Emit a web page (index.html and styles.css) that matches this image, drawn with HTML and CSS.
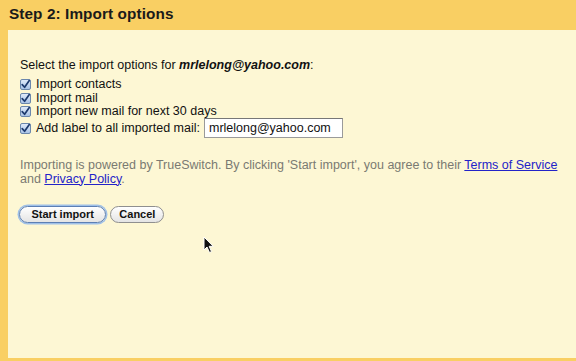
FILE: index.html
```html
<!DOCTYPE html>
<html>
<head>
<meta charset="utf-8">
<link rel="stylesheet" href="styles.css">
</head>
<body>
<div class="panel">
  <div class="header">Step 2: Import options</div>
  <div class="content">
    <div class="intro">Select the import options for <b><i>mrlelong@yahoo.com</i></b>:</div>
    <div class="options">
      <label class="opt"><span class="cb"><svg viewBox="0 0 11 11" width="11" height="11"><path d="M2.2 5.6 L4.6 8.3 L9.3 1.6" fill="none" stroke="#1d3a6e" stroke-width="1.7" stroke-linecap="round" stroke-linejoin="round"/></svg></span>Import contacts</label>
      <label class="opt"><span class="cb"><svg viewBox="0 0 11 11" width="11" height="11"><path d="M2.2 5.6 L4.6 8.3 L9.3 1.6" fill="none" stroke="#1d3a6e" stroke-width="1.7" stroke-linecap="round" stroke-linejoin="round"/></svg></span>Import mail</label>
      <label class="opt"><span class="cb"><svg viewBox="0 0 11 11" width="11" height="11"><path d="M2.2 5.6 L4.6 8.3 L9.3 1.6" fill="none" stroke="#1d3a6e" stroke-width="1.7" stroke-linecap="round" stroke-linejoin="round"/></svg></span>Import new mail for next 30 days</label>
      <label class="opt last"><span class="cb"><svg viewBox="0 0 11 11" width="11" height="11"><path d="M2.2 5.6 L4.6 8.3 L9.3 1.6" fill="none" stroke="#1d3a6e" stroke-width="1.7" stroke-linecap="round" stroke-linejoin="round"/></svg></span>Add label to all imported mail:<span class="field">mrlelong@yahoo.com</span></label>
    </div>
    <p class="note">Importing is powered by TrueSwitch. By clicking 'Start import', you agree to their <a href="#">Terms of Service</a> and <a href="#">Privacy Policy</a>.</p>
    <div class="buttons">
      <span class="btn primary">Start import</span>
      <span class="btn">Cancel</span>
    </div>
  </div>
  <svg class="cursor" viewBox="0 0 12 18" width="12" height="18"><path d="M1 1 L1 14 L4 11 L6.5 16.5 L8.5 15.6 L6.2 10.3 L10.2 10.3 Z" fill="#111" stroke="#fff" stroke-width="1"/></svg>
</div>
</body>
</html>
```
FILE: styles.css
```css
html, body {
  margin: 0;
  padding: 0;
  background: #f9cf63;
}
body {
  width: 576px;
  height: 361px;
  overflow: hidden;
  font-family: "Liberation Sans", Arial, sans-serif;
}
.panel {
  position: relative;
  width: 576px;
  height: 361px;
  background: #f9cf63;
  display: flex;
  flex-direction: column;
}
.header {
  height: 30px;
  box-sizing: border-box;
  padding: 5px 0 0 9px;
  font-size: 15.3px;
  font-weight: bold;
  color: #1a1a1a;
  letter-spacing: 0.1px;
}
.content {
  flex: 1;
  margin: 0 0 3px 8px;
  background: #fdf7d4;
  padding: 28px 0 0 12px;
  font-size: 12.5px;
  color: #111;
}
.intro {
  line-height: 14px;
  margin-bottom: 6px;
}
.options {
  display: flex;
  flex-direction: column;
}
.opt {
  display: flex;
  align-items: center;
  height: 13.5px;
  line-height: 13px;
}
.opt.last {
  height: 21px;
  margin-top: -1px;
}
.cb {
  width: 11px;
  height: 11px;
  box-sizing: border-box;
  border: 1px solid #6b87ac;
  border-radius: 2px;
  background: linear-gradient(#dfeafa, #a9c3e6);
  margin-right: 5px;
  display: inline-flex;
}
.cb svg { display: block; margin: -1px; }
.field {
  display: inline-block;
  margin-left: 4px;
  width: 139px;
  height: 20px;
  box-sizing: border-box;
  border: 1px solid #9a9a9a;
  border-top-color: #777;
  background: #fff;
  padding: 2px 0 0 4px;
  font-size: 12.5px;
  line-height: 15px;
}
.note {
  margin: 19px 0 0 0;
  color: #7a7a72;
  line-height: 14px;
  font-size: 12.5px;
}
.note a {
  color: #2323c8;
  font-weight: normal;
}
.buttons {
  display: flex;
  gap: 4px;
  margin-top: 20px;
  margin-left: -1px;
}
.btn {
  display: inline-block;
  height: 17px;
  box-sizing: border-box;
  line-height: 15px;
  padding: 0 8px;
  border: 1px solid #8f8f8f;
  border-radius: 9px;
  background: linear-gradient(#ffffff, #e4e4e4);
  font-size: 11px;
  font-weight: bold;
  color: #111;
}
.btn.primary {
  border-color: #5c7fb4;
  box-shadow: 0 0 0 1.5px #9fc0e8;
  padding: 0 11.5px;
}
.cursor {
  position: absolute;
  left: 203px;
  top: 236px;
}
```
